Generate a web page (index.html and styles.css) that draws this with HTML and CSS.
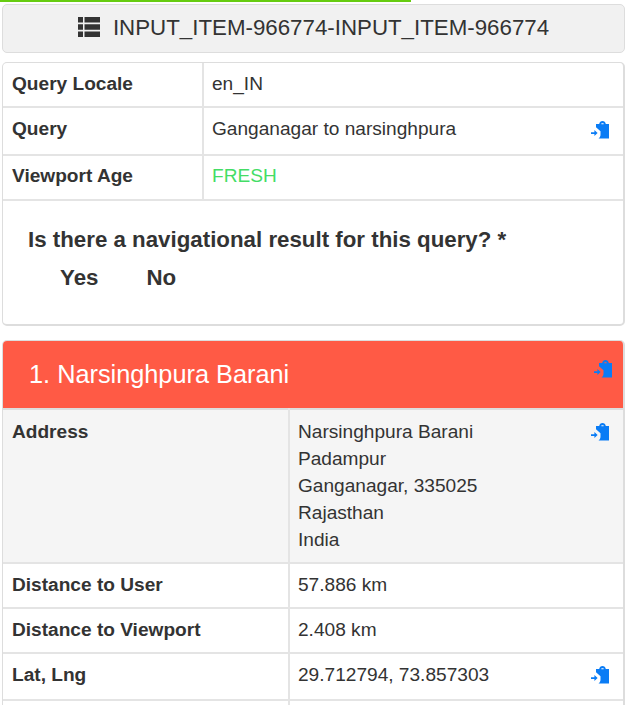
FILE: index.html
```html
<!DOCTYPE html>
<html lang="en">
<head>
<meta charset="utf-8">
<title>Input item</title>
<link rel="stylesheet" href="styles.css">
</head>
<body>
<svg class="defs" width="0" height="0" aria-hidden="true">
  <symbol id="paste" viewBox="0 0 19 19">
    <path fill-rule="evenodd" d="M5 4h3.2C8.5 2 9.8 1 11.5 1s3 1 3.3 3H18v14.5H7.5c1.4-1 2-2.4 2-4V11.2L5 7.2zM10.4 3.2v1h2.2v-1z"/>
    <path d="M0 12.2h3.4V10l3.2 3-3.2 3v-2.1H0z"/>
  </symbol>
</svg>
<div class="progress"></div>
<main class="page">
  <header class="title-bar">
    <svg class="list-icon" viewBox="0 0 22 20" aria-hidden="true"><path d="M0 0h5v5.4H0zM6.5 0H22v5.4H6.5zM0 7.3h5v5.4H0zM6.5 7.3H22v5.4H6.5zM0 14.6h5V20H0zM6.5 14.6H22V20H6.5z"/></svg>
    <span>INPUT_ITEM-966774-INPUT_ITEM-966774</span>
  </header>

  <section class="card query-card">
    <table class="info query-table">
      <tr class="h44"><th>Query Locale</th><td>en_IN</td></tr>
      <tr class="h48"><th>Query</th><td>Ganganagar to narsinghpura<svg class="paste"><use href="#paste"/></svg></td></tr>
      <tr class="h45 tight"><th>Viewport Age</th><td class="fresh">FRESH</td></tr>
    </table>
    <div class="question">
      <h2>Is there a navigational result for this query? *</h2>
      <div class="answers"><span>Yes</span><span>No</span></div>
    </div>
  </section>

  <section class="card result-card">
    <div class="result-head">
      <h3>1. Narsinghpura Barani</h3>
      <svg class="paste"><use href="#paste"/></svg>
    </div>
    <table class="info result-table">
      <tr class="shaded">
        <th>Address</th>
        <td class="address">Narsinghpura Barani<br>Padampur<br>Ganganagar, 335025<br>Rajasthan<br>India<svg class="paste"><use href="#paste"/></svg></td>
      </tr>
      <tr class="h45"><th>Distance to User</th><td>57.886 km</td></tr>
      <tr class="h45"><th>Distance to Viewport</th><td>2.408 km</td></tr>
      <tr class="h47 lat"><th>Lat, Lng</th><td>29.712794, 73.857303<svg class="paste"><use href="#paste"/></svg></td></tr>
      <tr class="h47"><th></th><td></td></tr>
    </table>
  </section>
</main>
</body>
</html>
```
FILE: styles.css
```css
* { box-sizing: border-box; }
html, body { margin: 0; height: 705px; overflow: hidden; }
body {
  background: #fff;
  color: #333;
  font-family: "Liberation Sans", Arial, sans-serif;
  font-size: 19.1px;
  line-height: 27px;
}
.defs { position: absolute; }
.progress { width: 411px; height: 2px; background: #66cc11; }
.page {
  height: 703px;
  overflow: hidden;
  padding: 2px 3px 0 2px;
  display: flex;
  flex-direction: column;
}
.title-bar {
  flex: none;
  height: 49px;
  padding-bottom: 2px;
  border: 1px solid #ddd;
  border-radius: 5px;
  background: #f1f1f1;
  display: flex;
  align-items: center;
  justify-content: center;
  gap: 13px;
  font-size: 22.3px;
  margin-bottom: 9px;
}
.list-icon { width: 22px; height: 20px; fill: #333; margin-top: -1px; }
.card {
  flex: none;
  border: 2px solid #ddd;
  border-width: 1px 2px 2px 1px;
  border-radius: 5px;
  overflow: hidden;
  background: #fff;
}
.query-card { height: 264px; margin-bottom: 14px; }
.info { width: 100%; border-collapse: collapse; table-layout: fixed; }
.info th, .info td {
  position: relative;
  padding: 7px 9px;
  text-align: left;
  vertical-align: top;
  border-bottom: 2px solid #e4e4e4;
}
.info th { font-weight: 700; border-right: 2px solid #e4e4e4; }
.info .tight th, .info .tight td { padding-top: 6px; padding-bottom: 6px; }
.query-table th { width: 200px; }
.query-table td { padding-left: 8px; }
.result-table th { width: 286px; }
.result-table td { padding-left: 8px; }
.h44 { height: 44px; }
.h45 { height: 45px; }
.h47 { height: 47px; }
.h48 { height: 48px; }
.fresh { color: #44dd66; }
.paste {
  position: absolute;
  top: 12px;
  right: 13px;
  width: 19px;
  height: 19px;
  fill: #0a7cf5;
}
.lat .paste { top: 11px; }
.question { padding: 25px 25px 0; }
.question h2 { margin: 0; font-size: 22.3px; font-weight: 700; line-height: 28px; }
.answers {
  display: flex;
  gap: 48px;
  padding: 10px 0 0 32px;
  font-size: 22.3px;
  font-weight: 700;
  line-height: 28px;
}
.result-head {
  position: relative;
  height: 67px;
  background: #ff5a45;
  color: #fff;
  padding: 18px 26px 0;
}
.result-head h3 { margin: 0; font-size: 25.3px; font-weight: 400; line-height: 30px; }
.result-head .paste { top: 18px; right: 10px; }
.result-table tr:first-child th, .result-table tr:first-child td { border-top: 2px solid #ddd; padding-top: 8px; padding-bottom: 9px; }
.shaded { background: #f5f5f5; }
```
